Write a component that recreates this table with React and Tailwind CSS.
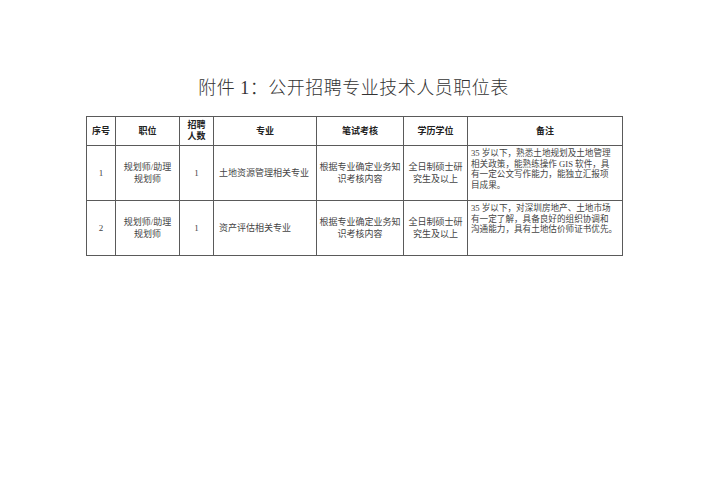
import React from "react";

const rows = [
  {
    no: "1",
    post: ["规划师/助理", "规划师"],
    count: "1",
    major: "土地资源管理相关专业",
    exam: ["根据专业确定业务知", "识考核内容"],
    edu: ["全日制硕士研", "究生及以上"],
    note: [
      "35 岁以下，熟悉土地规划及土地管理",
      "相关政策，能熟练操作 GIS 软件，具",
      "有一定公文写作能力，能独立汇报项",
      "目成果。",
    ],
  },
  {
    no: "2",
    post: ["规划师/助理", "规划师"],
    count: "1",
    major: "资产评估相关专业",
    exam: ["根据专业确定业务知", "识考核内容"],
    edu: ["全日制硕士研", "究生及以上"],
    note: [
      "35 岁以下，对深圳房地产、土地市场",
      "有一定了解，具备良好的组织协调和",
      "沟通能力，具有土地估价师证书优先。",
    ],
  },
];

const font = { fontFamily: '"Liberation Serif", "Noto Sans CJK SC", serif' };

export default function App() {
  const th = "border border-[#5a5a5a] font-bold text-center align-middle text-[9px] leading-[11px] text-[#222]";
  const td = "border border-[#5a5a5a] text-center align-middle text-[9px] leading-[12.5px] text-[#444]";

  return (
    <div className="w-[707px] h-[500px] bg-white pt-[76px]" style={font}>
      <h1 className="text-center text-[18px] leading-[24px] font-light text-[#333] tracking-[0.5px]">
        附件 1：公开招聘专业技术人员职位表
      </h1>
      <table className="mt-[16px] ml-[86px] border-collapse table-fixed w-[536px]">
        <colgroup>
          <col className="w-[29px]" />
          <col className="w-[64px]" />
          <col className="w-[34px]" />
          <col className="w-[103px]" />
          <col className="w-[87px]" />
          <col className="w-[64px]" />
          <col className="w-[155px]" />
        </colgroup>
        <thead>
          <tr className="h-[29px]">
            <th className={th}>序号</th>
            <th className={th}>职位</th>
            <th className={th}>
              招聘
              <br />
              人数
            </th>
            <th className={th}>专业</th>
            <th className={th}>笔试考核</th>
            <th className={th}>学历学位</th>
            <th className={th}>备注</th>
          </tr>
        </thead>
        <tbody>
          {rows.map((r) => (
            <tr key={r.no} className="h-[55px]">
              <td className={td}>{r.no}</td>
              <td className={td}>
                {r.post[0]}
                <br />
                {r.post[1]}
              </td>
              <td className={td}>{r.count}</td>
              <td className={td + " !text-left pl-[5px]"}>{r.major}</td>
              <td className={td}>
                {r.exam[0]}
                <br />
                {r.exam[1]}
              </td>
              <td className={td}>
                {r.edu[0]}
                <br />
                {r.edu[1]}
              </td>
              <td className="border border-[#5a5a5a] align-top text-left text-[8.6px] leading-[10.5px] text-[#444] pl-[3px] pr-0 pt-[2px] whitespace-nowrap">
                {r.note.map((line, i) => (
                  <div key={i}>{line}</div>
                ))}
              </td>
            </tr>
          ))}
        </tbody>
      </table>
    </div>
  );
}
